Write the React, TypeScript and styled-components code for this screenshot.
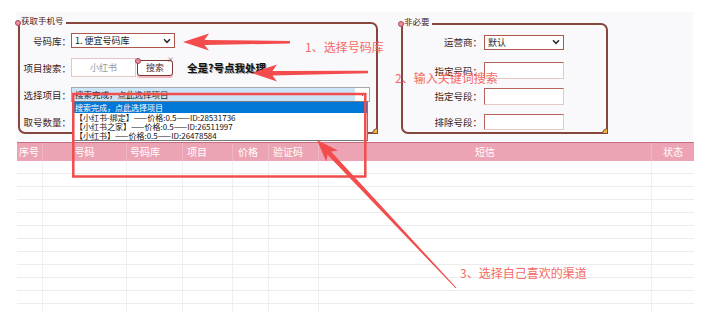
import React from "react";
import styled, { createGlobalStyle } from "styled-components";

const GlobalStyle = createGlobalStyle`
  html, body {
    margin: 0;
    padding: 0;
    background: #fff;
  }
  body {
    font-family: "Noto Sans CJK SC", "Liberation Sans", sans-serif;
  }
`;

const Page = styled.div`
  position: relative;
  width: 703px;
  height: 312px;
  overflow: hidden;
  background: #fff;
`;

const FormArea = styled.div`
  display: flex;
  align-items: flex-start;
  gap: 23px;
  margin: 12px 0 0 16px;
  padding: 10px 0 0 2px;
  width: 677px;
  height: 130px;
  box-sizing: border-box;
  background: #f9f9fb;
`;

const Panel = styled.div<{ $w: number; $h: number; $offset?: number }>`
  position: relative;
  margin-top: ${(p) => p.$offset ?? 0}px;
  width: ${(p) => p.$w}px;
  height: ${(p) => p.$h}px;
  box-sizing: border-box;
  border: 2px solid #86463c;
  border-radius: 0 7px 0 7px;
`;

const Caption = styled.span`
  position: absolute;
  top: -9px;
  left: -1px;
  padding: 0 2px;
  font-size: 8.5px;
  line-height: 10px;
  color: #4a2420;
  background: #f9f9fb;
  white-space: nowrap;
`;

const Flower = styled.span`
  position: absolute;
  top: -4px;
  left: -5px;
  width: 4px;
  height: 4px;
  border-radius: 50%;
  background: #f08ea4;
  border: 1px solid #a4485a;
`;

const GoldCorner = styled.span`
  position: absolute;
  right: -2px;
  bottom: -2px;
  width: 6px;
  height: 6px;
  box-sizing: border-box;
  background: #eab73c;
  border: 1px solid #86463c;
  border-top-left-radius: 6px;
`;

const Rows = styled.div<{ $top: number; $gap: number }>`
  display: flex;
  flex-direction: column;
  gap: ${(p) => p.$gap}px;
  padding-top: ${(p) => p.$top}px;
`;

const Row = styled.div<{ $gap?: number; $extra?: number }>`
  display: flex;
  align-items: center;
  gap: ${(p) => p.$gap ?? 0}px;
  height: 17px;
  margin-bottom: ${(p) => p.$extra ?? 0}px;
`;

const Label = styled.span<{ $w: number }>`
  flex-shrink: 0;
  width: ${(p) => p.$w}px;
  text-align: right;
  font-size: 9.5px;
  color: #3e2420;
  white-space: nowrap;
`;

const SelectBox = styled.div<{ $w: number }>`
  display: flex;
  align-items: center;
  justify-content: space-between;
  width: ${(p) => p.$w}px;
  height: 15px;
  box-sizing: border-box;
  padding: 0 3px 0 3px;
  border: 1px solid #ac564c;
  background: #fff;
  font-size: 9px;
  color: #1a1a1a;
  white-space: nowrap;
`;

const Field = styled.div<{ $w: number; $h: number; $pale?: boolean }>`
  display: flex;
  align-items: center;
  justify-content: center;
  width: ${(p) => p.$w}px;
  height: ${(p) => p.$h}px;
  box-sizing: border-box;
  border: 1px solid ${(p) => (p.$pale ? "#e6c4c4" : "#b4625a")};
  border-right-color: #e6c8c6;
  border-bottom-color: #e6c8c6;
  background: #fff;
  font-size: 9px;
  color: #9a9a9a;
`;

const SearchButton = styled.div`
  position: relative;
  display: flex;
  align-items: center;
  justify-content: center;
  margin-left: 1px;
  width: 36px;
  height: 16px;
  box-sizing: border-box;
  border: 1px solid #7a3a32;
  border-radius: 3px;
  background: #fff;
  box-shadow: 0 2px 0 #f3b7c6;
  font-size: 9px;
  color: #5a2620;

  &::before {
    content: "";
    position: absolute;
    top: -3px;
    left: -3px;
    width: 4px;
    height: 4px;
    border-radius: 50%;
    background: #ee8aa0;
    border: 1px solid #a4485a;
  }

  &::after {
    content: "×";
    position: absolute;
    top: -6px;
    right: -2px;
    font-size: 7px;
    line-height: 8px;
    color: #7a3a32;
  }
`;

const Hint = styled.span`
  margin-left: 14px;
  font-size: 10.5px;
  font-weight: 700;
  color: #111;
  text-shadow: 1px 1px 0 #9a9a9a, -1px 0 0 #fff, 0 -1px 0 #fff;
  white-space: nowrap;
`;

const ProjectSelect = styled.div`
  position: relative;
  display: flex;
  align-items: center;
  width: 299px;
  height: 15px;
  box-sizing: border-box;
  border: 1px solid #a8a8a8;
  background: #fff;
`;

const ProjectValue = styled.div`
  width: 283px;
  height: 100%;
  padding-left: 3px;
  box-sizing: border-box;
  background: #cce4f7;
  font-size: 8.5px;
  line-height: 12px;
  color: #1a1a1a;
  white-space: nowrap;
  overflow: hidden;
`;

const ArrowSlot = styled.div`
  flex: 1;
  display: flex;
  align-items: center;
  justify-content: center;
`;

const DropList = styled.div`
  position: absolute;
  top: 13px;
  left: 0;
  width: 296px;
  box-sizing: border-box;
  border: 1px solid #7a7a7a;
  background: #fff;
  z-index: 2;
`;

const DropItem = styled.div<{ $active?: boolean }>`
  height: ${(p) => (p.$active ? 11 : 9)}px;
  line-height: ${(p) => (p.$active ? 11 : 9)}px;
  padding-left: 2px;
  font-size: 8px;
  white-space: nowrap;
  overflow: hidden;
  color: ${(p) => (p.$active ? "#fff" : "#111")};
  background: ${(p) => (p.$active ? "#0078d7" : "transparent")};
`;

const Table = styled.div`
  margin-left: 17px;
  width: 677px;
`;

const columns = [
  { title: "序号", w: 26, pad: 2 },
  { title: "号码", w: 84 },
  { title: "号码库", w: 56, pad: 3 },
  { title: "项目", w: 50, pad: 4 },
  { title: "价格", w: 36, pad: 5 },
  { title: "验证码", w: 50, pad: 4 },
  { title: "短信", w: 333 },
  { title: "状态", w: 42 },
];

const gridCols = columns.map((c) => `${c.w}px`).join(" ");

const HeadRow = styled.div`
  display: grid;
  grid-template-columns: ${gridCols};
  height: 19px;
  box-sizing: border-box;
  border-top: 1px solid #c76e7e;
  background: #eca3b3;
`;

const HeadCell = styled.div<{ $pad?: number }>`
  padding-left: ${(p) => p.$pad ?? 0}px;
  text-align: ${(p) => (p.$pad === undefined ? "center" : "left")};
  font-size: 10px;
  line-height: 18px;
  color: #fff;
  white-space: nowrap;
  border-right: 1px solid rgba(255, 255, 255, 0.2);
  &:last-child {
    border-right: none;
  }
`;

const BodyRow = styled.div`
  display: grid;
  grid-template-columns: ${gridCols};
  height: 13px;
  box-sizing: border-box;
  border-bottom: 1px solid #ececec;
`;

const BodyCell = styled.div`
  border-right: 1px solid #f0f0f0;
  &:last-child {
    border-right: none;
  }
`;

const Overlay = styled.svg`
  position: absolute;
  left: 0;
  top: 0;
  width: 703px;
  height: 312px;
  pointer-events: none;
  z-index: 5;
`;

const Chevron = () => (
  <svg width="8" height="6" viewBox="0 0 8 6">
    <polyline points="1,1.2 4,4.3 7,1.2" fill="none" stroke="#2a2a2a" strokeWidth="1.5" />
  </svg>
);

const items = [
  "【小红书-绑定】——价格:0.5——ID:28531736",
  "【小红书之家】——价格:0.5——ID:26511997",
  "【小红书】——价格:0.5——ID:26478584",
];

const RED = "#f24c4c";
const NOTE = "#f56a66";

export default function App() {
  return (
    <Page>
      <GlobalStyle />
      <FormArea>
        <Panel $w={360} $h={112}>
          <Caption>获取手机号</Caption>
          <Flower />
          <GoldCorner />
          <Rows $top={8} $gap={10}>
            <Row>
              <Label $w={51}>号码库：</Label>
              <SelectBox $w={104}>
                <span>1. 便宜号码库</span>
                <Chevron />
              </SelectBox>
            </Row>
            <Row>
              <Label $w={51}>项目搜索：</Label>
              <Field $w={65} $h={19} $pale>
                小红书
              </Field>
              <SearchButton>搜索</SearchButton>
              <Hint>全是?号点我处理</Hint>
            </Row>
            <Row>
              <Label $w={51}>选择项目：</Label>
              <ProjectSelect>
                <ProjectValue>搜索完成，点此选择项目</ProjectValue>
                <ArrowSlot>
                  <svg width="5" height="3" viewBox="0 0 5 3">
                    <polygon points="0,0 5,0 2.5,3" fill="#333" />
                  </svg>
                </ArrowSlot>
                <DropList>
                  <DropItem $active>搜索完成，点此选择项目</DropItem>
                  {items.map((t) => (
                    <DropItem key={t}>{t}</DropItem>
                  ))}
                </DropList>
              </ProjectSelect>
            </Row>
            <Row>
              <Label $w={51}>取号数量：</Label>
            </Row>
          </Rows>
        </Panel>

        <Panel $w={207} $h={111} $offset={1}>
          <Caption>非必要</Caption>
          <Flower />
          <GoldCorner />
          <Rows $top={8.5} $gap={8.5}>
            <Row $gap={2} $extra={3}>
              <Label $w={79}>运营商：</Label>
              <SelectBox $w={80}>
                <span>默认</span>
                <Chevron />
              </SelectBox>
            </Row>
            <Row $gap={2}>
              <Label $w={79}>指定号码：</Label>
              <Field $w={80} $h={17} />
            </Row>
            <Row $gap={2}>
              <Label $w={79}>指定号段：</Label>
              <Field $w={80} $h={17} />
            </Row>
            <Row $gap={2}>
              <Label $w={79}>排除号段：</Label>
              <Field $w={80} $h={16} />
            </Row>
          </Rows>
        </Panel>
      </FormArea>

      <Table>
        <HeadRow>
          {columns.map((c) => (
            <HeadCell key={c.title} $pad={c.pad}>
              {c.title}
            </HeadCell>
          ))}
        </HeadRow>
        {Array.from({ length: 12 }).map((_, r) => (
          <BodyRow key={r}>
            {columns.map((c) => (
              <BodyCell key={c.title} />
            ))}
          </BodyRow>
        ))}
      </Table>

      <Overlay viewBox="0 0 703 312">
        <rect x="73.3" y="94" width="292" height="82.5" fill="none" stroke={RED} strokeWidth="2.5" />
        <polygon
          points="183,42 209,33.5 204.5,40 290,41 290,43.5 204.5,45 209,50.5"
          fill={RED}
        />
        <polygon
          points="252,73 277,64.5 272.5,71 368,70.8 368,73.2 272.5,75.5 277,81.5"
          fill={RED}
        />
        <polygon
          points="317,140 337.9,150.5 331.1,151.4 456.4,287.7 455.6,288.3 327.5,154.8 326.3,161.5"
          fill={RED}
        />
        <text x="305" y="52" fontSize="12" fill={NOTE} fontFamily='"Noto Sans CJK SC", sans-serif'>
          1、选择号码库
        </text>
        <text x="395" y="83" fontSize="12" fill={NOTE} fontFamily='"Noto Sans CJK SC", sans-serif'>
          2、输入关键词搜索
        </text>
        <text x="460" y="278" fontSize="12" fill={NOTE} fontFamily='"Noto Sans CJK SC", sans-serif'>
          3、选择自己喜欢的渠道
        </text>
      </Overlay>
    </Page>
  );
}
